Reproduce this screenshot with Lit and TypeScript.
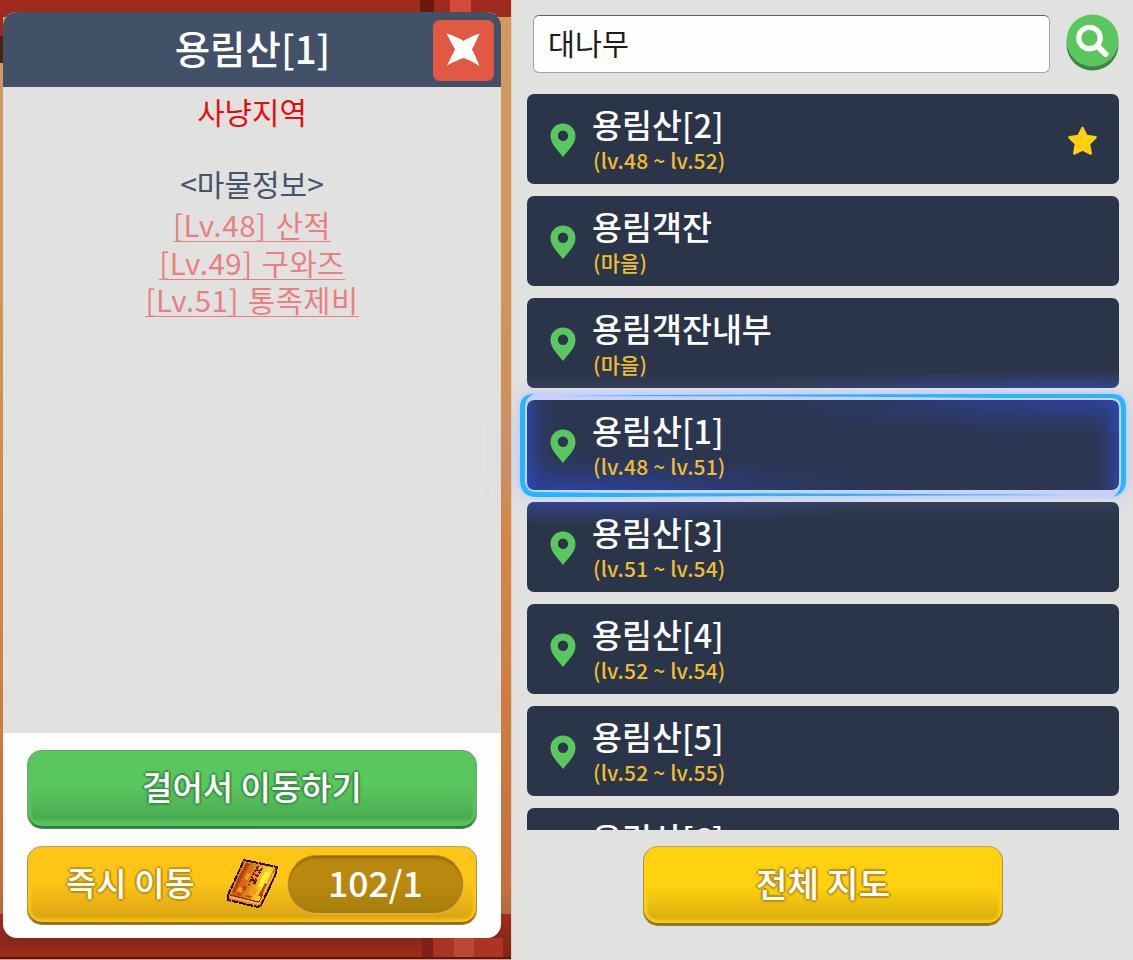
import { LitElement, css, html, svg, nothing } from "lit";

interface Place {
  name: string;
  info: string;
  favorite?: boolean;
  active?: boolean;
}

const PLACES: Place[] = [
  { name: "용림산[2]", info: "(lv.48 ~ lv.52)", favorite: true },
  { name: "용림객잔", info: "(마을)" },
  { name: "용림객잔내부", info: "(마을)" },
  { name: "용림산[1]", info: "(lv.48 ~ lv.51)", active: true },
  { name: "용림산[3]", info: "(lv.51 ~ lv.54)" },
  { name: "용림산[4]", info: "(lv.52 ~ lv.54)" },
  { name: "용림산[5]", info: "(lv.52 ~ lv.55)" },
  { name: "용림산[6]", info: "(lv.53 ~ lv.55)" },
];

const MONSTERS = ["[Lv.48] 산적", "[Lv.49] 구와즈", "[Lv.51] 통족제비"];

class PlaceCard extends LitElement {
  static properties = {
    place: { attribute: false },
  };

  static styles = css`
    :host {
      display: block;
      position: relative;
    }

    .card {
      box-sizing: border-box;
      width: 592px;
      height: 90px;
      border-radius: 7px;
      background: #2b3549;
      display: flex;
      align-items: center;
      padding: 0 21px 0 23px;
    }

    .card.active {
      background:
        radial-gradient(ellipse 330px 36px at 8% 100%, rgb(45 72 190 / 65%), rgb(45 72 190 / 20%) 55%, transparent),
        radial-gradient(ellipse 330px 36px at 92% 0%, rgb(45 72 190 / 65%), rgb(45 72 190 / 20%) 55%, transparent),
        linear-gradient(90deg, rgb(45 72 180 / 80%), rgb(45 72 180 / 20%) 14px, transparent 32px),
        linear-gradient(270deg, rgb(45 72 180 / 80%), rgb(45 72 180 / 20%) 14px, transparent 32px), #2b3651;
    }

    .pin {
      width: 26px;
      height: 34px;
      margin-top: 1px;
      flex: none;
    }

    .text {
      margin-left: 16px;
      flex: 1;
    }

    .name {
      margin: 0;
      font-size: 32.6px;
      line-height: 40px;
      font-weight: 500;
      color: white;
      white-space: nowrap;
    }

    .info {
      margin: 1px 0 0;
      font-size: 21px;
      line-height: 30px;
      font-weight: 500;
      letter-spacing: 0.15px;
      color: #efbd2f;
      padding-left: 1px;
      white-space: nowrap;
    }

    .star {
      width: 31px;
      height: 30px;
      margin-top: 3px;
      flex: none;
    }

    .glow {
      position: absolute;
      z-index: 1;
      left: -107px;
      top: -112px;
      width: 800px;
      height: 314px;
      pointer-events: none;
    }
  `;

  declare place: Place;

  constructor() {
    super();
    this.place = { name: "", info: "" };
  }

  private renderStar() {
    return html`
      <svg class="star" viewBox="0 0 31 30">
        <path
          d="M15.5 2 L19.5 10 L28.5 11.3 L22 17.8 L23.7 27.5 L15.5 23.4 L7.3 27.5 L9 17.8 L2.5 11.3 L11.5 10 Z"
          fill="#ffcf10"
          stroke="#ffcf10"
          stroke-width="2.6"
          stroke-linejoin="round"
        />
      </svg>
    `;
  }

  // Origin of the drawing is the card's top left corner.
  private renderGlow() {
    return html`
      <svg class="glow" viewBox="-107 -112 800 314">
        <defs>
          <filter id="wide" x="-20%" y="-100%" width="140%" height="300%">
            <feGaussianBlur stdDeviation="14" />
          </filter>
          <filter id="soft" x="-5%" y="-20%" width="110%" height="140%">
            <feGaussianBlur stdDeviation="1.4" />
          </filter>
          <clipPath id="outside">
            <path clip-rule="evenodd" d="M-107-112H693V202H-107Z M7 0H585Q592 0 592 7V83Q592 90 585 90H7Q0 90 0 83V7Q0 0 7 0Z" />
          </clipPath>
          <clipPath id="above">
            <rect x="0" y="-102" width="592" height="90" rx="7" />
          </clipPath>
          <clipPath id="below">
            <rect x="0" y="102" width="592" height="90" rx="7" />
          </clipPath>
          <radialGradient id="blue">
            <stop offset="0" stop-color="#2f50d8" stop-opacity=".5" />
            <stop offset=".5" stop-color="#2f50d8" stop-opacity=".2" />
            <stop offset="1" stop-color="#2f50d8" stop-opacity="0" />
          </radialGradient>
        </defs>
        <g clip-path="url(#outside)">
          ${svg`
            <rect x="-16" y="-4" width="624" height="98" rx="20" fill="#a0a8ff" fill-opacity=".32" filter="url(#wide)" />
            <ellipse cx="545" cy="-10" rx="330" ry="20" fill="url(#blue)" clip-path="url(#above)" />
            <ellipse cx="40" cy="100" rx="330" ry="26" fill="url(#blue)" clip-path="url(#below)" />
            <rect x="-4" y="-4" width="600" height="98" rx="11" fill="none" stroke="#c7d0fd" stroke-width="9" filter="url(#soft)" />
            <path d="M-7 8Q-7-6 7-6Q-2-3-2 8V80Q-2 92 10 92L90 93Q300 93 550 95Q300 95.500 90 97H10Q-7 97-7 80Z" fill="#22b8fa" />
            <path d="M599 82Q598 94 586 97Q594 91 594 82V9Q594-2 585-2H470Q300-4 30-4Q240-6 470-6H585Q599-6 599 9Z" fill="#22b8fa" />
          `}
        </g>
      </svg>
    `;
  }

  render() {
    const { name, info, favorite, active } = this.place;
    return html`
      <div class="card ${active ? "active" : ""}">
        <svg class="pin" viewBox="0 0 26 34">
          <path
            fill="#59c75e"
            fill-rule="evenodd"
            d="M13 0.500C5.800 0.500 0.500 6 0.500 13C0.500 21 8 27.500 13 34C18 27.500 25.500 21 25.500 13C25.500 6 20.200 0.500 13 0.500ZM13 7.500A5.200 5.200 0 1 1 13 17.900A5.200 5.200 0 1 1 13 7.500Z"
          />
        </svg>
        <div class="text">
          <p class="name">${name}</p>
          <p class="info">${info}</p>
        </div>
        ${favorite ? this.renderStar() : nothing}
      </div>
      ${active ? this.renderGlow() : nothing}
    `;
  }
}

class AppRoot extends LitElement {
  static styles = css`
    :host {
      display: grid;
      grid-template-columns: 511px 622px;
      width: 1133px;
      height: 960px;
      overflow: hidden;
      font-family: "Noto Sans CJK KR", sans-serif;
    }

    p,
    h1 {
      margin: 0;
    }

    .map {
      box-sizing: border-box;
      height: 960px;
      padding: 12px 10px 22px 3px;
      background:
        linear-gradient(#4a2412, #4a2412) 0 36px / 3px 27px no-repeat,
        linear-gradient(#9f2b1e, #9f2b1e) 0 0 / 3px 36px no-repeat,
        linear-gradient(90deg, transparent 420px, #6c1710 420px 434px, transparent 434px 450px, #d64a38 450px 471px, transparent 471px)
          0 0 / 511px 12px no-repeat,
        linear-gradient(90deg, transparent 422px, #7d2018 422px 433px, #a83422 433px 454px, #bb4a31 454px 474px, #ad3420 474px 503px, #8a2415 503px)
          0 938px / 511px 19px no-repeat,
        linear-gradient(#9f2b1e 17px, #d39a60 17px, #d29458 300px, #d28446 600px, #c4703c 890px, #b26740 914px, #a82a17 914px, #84291c 940px, #a62a17 957px, #5d1711 957px 959px, #d69487 959px);
    }

    .panel {
      display: flex;
      flex-direction: column;
      height: 926px;
      border-radius: 14px;
      overflow: hidden;
      background: #fefefd;
    }

    .panel-head {
      box-sizing: border-box;
      height: 75px;
      background: #415168;
      display: grid;
      grid-template-columns: 61px 1fr 61px;
      align-items: center;
      padding: 1px 7px 0 8px;
    }

    .title {
      grid-column: 2;
      text-align: center;
      font-size: 38.5px;
      line-height: 60px;
      padding-bottom: 7px;
      font-weight: 500;
      color: white;
    }

    .close {
      width: 61px;
      height: 61px;
      padding: 0;
      border: none;
      border-radius: 7px;
      background: #e15843;
    }

    .close svg {
      display: block;
      width: 61px;
      height: 61px;
    }

    .panel-body {
      height: 646px;
      background: #e1e1e0;
      text-align: center;
      font-size: 30px;
      line-height: 38px;
      color: #43546b;
    }

    .zone {
      padding-top: 5px;
      font-size: 29.8px;
      color: #e90c0c;
    }

    .label {
      padding-top: 34px;
    }

    .monsters {
      list-style: none;
      margin: 3px 0 0;
      padding: 0;
      color: #ea7f80;
    }

    .monsters li {
      height: 37.7px;
    }

    .monsters span {
      display: inline-block;
      height: 34px;
      font-size: 29.5px;
      line-height: 34px;
      letter-spacing: 0.5px;
      word-spacing: 2px;
      border-bottom: 1.5px solid #ea7f80;
    }

    .panel-foot {
      display: flex;
      flex-direction: column;
      gap: 17px;
      padding: 17px 24px 0;
    }

    .button {
      box-sizing: border-box;
      display: flex;
      align-items: center;
      justify-content: center;
      height: 79px;
      padding: 0 0 8px;
      border: 1.5px solid;
      border-radius: 15px;
      font: 500 33px/48px "Noto Sans CJK KR", sans-serif;
      color: white;
    }

    .green {
      border-color: #6ea56d #7f9f7f #5f7d60;
      background: linear-gradient(#59c75e 45%, #4aab50 88%, #53c05a 92%);
      box-shadow:
        inset 0 -2px 0 #37793e,
        inset 0 -5px 3px #56c45b,
        inset 5px 0 3px -2px #59c75e,
        inset -5px 0 3px -2px #59c75e;
      text-shadow:
        2px 0 1px #3f9147,
        -2px 0 1px #3f9147,
        0 2px 1px #3f9147,
        0 -2px 1px #3f9147,
        0 0 3px #3f9147;
    }

    .amber,
    .yellow {
      border-color: #b9a26d #a38f64 #8d7d50;
      text-shadow:
        2px 0 1px #c0930f,
        -2px 0 1px #c0930f,
        0 2px 1px #c0930f,
        0 -2px 1px #c0930f,
        0 0 3px #c0930f;
    }

    .amber {
      background: linear-gradient(#ffc516 45%, #dba713 90%);
      box-shadow:
        inset 0 -2px 0 #8d6c16,
        inset 0 -5px 3px #fcc216,
        inset 5px 0 3px -2px #ffc516,
        inset -5px 0 3px -2px #ffc516;
      justify-content: flex-start;
      padding-left: 38px;
    }

    .yellow {
      width: 360px;
      height: 80px;
      font-size: 34.5px;
      background: linear-gradient(#ffd20f 50%, #dbb00e 90%);
      box-shadow:
        inset 0 -2px 0 #8d7413,
        inset 0 -5px 3px #fccd10,
        inset 5px 0 3px -2px #ffd20f,
        inset -5px 0 3px -2px #ffd20f;
    }

    .book {
      width: 52px;
      height: 50px;
      margin: 5px 0 0 32px;
    }

    .count {
      box-sizing: border-box;
      width: 177px;
      height: 59px;
      margin: 6px 0 0 8px;
      border: 1.5px solid #dcb052;
      border-top-color: #b98b15;
      border-radius: 30px;
      background: linear-gradient(#b9890f 50%, #a67d0c);
      box-shadow: inset 0 2px 2px #8e690c;
      font-size: 35.5px;
      line-height: 52px;
      text-align: center;
      text-shadow: none;
    }

    .side {
      box-sizing: border-box;
      height: 960px;
      padding: 14px 0 0 15px;
      background: #e1e1e0;
      border-left: 1px solid #d5cfc6;
    }

    .search {
      display: flex;
      gap: 16px;
      padding-left: 6px;
      height: 80px;
    }

    .field {
      box-sizing: border-box;
      width: 517px;
      height: 58px;
      margin-top: 1px;
      padding: 0 14px 4px;
      border: 1.5px solid #a5a5a3;
      border-top-color: #62625f;
      border-radius: 6px;
      background: #fefefd;
      font: 400 29.3px/50px "Noto Sans CJK KR", sans-serif;
      color: #1c1c1c;
      outline: none;
    }

    .find {
      width: 53px;
      height: 58px;
      padding: 0;
      border: none;
      background: none;
    }

    .find svg {
      display: block;
      width: 53px;
      height: 58px;
    }

    .list {
      display: flex;
      flex-direction: column;
      gap: 12px;
      height: 736px;
      clip-path: inset(0 -100px);
    }

    .side-foot {
      display: flex;
      padding: 16px 0 0 116px;
    }
  `;

  private renderBook() {
    return html`
      <svg class="book" viewBox="0 0 52 50" shape-rendering="crispEdges">
        <defs>
          <linearGradient id="cover" x1="0" y1=".3" x2="1" y2=".6">
            <stop offset="0" stop-color="#c4480f" />
            <stop offset=".38" stop-color="#d76e14" />
            <stop offset=".6" stop-color="#f2a714" />
            <stop offset=".8" stop-color="#ffe022" />
            <stop offset="1" stop-color="#d98d12" />
          </linearGradient>
        </defs>
        <path fill="#dc8a2c" d="M17 1L50 8L48 17L34 46L31 48L1 41V36Z" />
        <path fill="url(#cover)" d="M19 3L47 9L32 43L4 36Z" />
        <path fill="#b83d12" d="M19 4L23 5L17 15L12 25L8 33L5 33L11 19ZM27 21L30 22L28 26L25 25ZM17 27L20 28L18 32L15 31Z" />
        <path fill="#f39a1b" d="M20 14L24 15L21 21L17 20ZM12 28L16 29L14 33L10 32ZM26 29L31 30L28 36L22 34Z" />
        <path fill="#fff13c" d="M38 13L43 13L41 19L37 22L35 28L31 28L34 20Z" />
        <path fill="#b94c10" d="M36 28L38 24L40 25L34 38L31 37ZM10 34L15 35L14 37L9 36ZM19 36L25 37L24 39L18 38Z" />
        <path
          fill="none"
          stroke="#4f1507"
          stroke-width="1.800"
          stroke-dasharray="3 1.500 2 1"
          d="M31 7L26 16L22 26M35 9L30 18L27 26M30 11L33 12M28 16L31 17M25 21L29 22"
        />
        <path fill="none" stroke="#f7b650" stroke-width="1.400" d="M3 38L32 45L47 14" />
        <path
          fill="none"
          stroke="#2a0e06"
          stroke-width="2"
          stroke-dasharray="7 .6"
          d="M17 1L50 8L48 17L34 46L31 48L1 41V36Z"
        />
        <path fill="none" stroke="#8f300e" stroke-width="1.200" d="M3 36L32 43L36 35" />
      </svg>
    `;
  }

  render() {
    return html`
      <div class="map">
        <section class="panel">
          <header class="panel-head">
            <h1 class="title">용림산[1]</h1>
            <button class="close" type="button" aria-label="닫기">
              <svg viewBox="0 0 61 61">
                <path
                  fill="white"
                  d="M13.500 13.500Q25 17 30.500 21Q36 17 46.500 13.500Q42 24 39 29.500Q42 35 46.500 46Q37 40 30.500 38Q24 40 14 45.500Q19 35 22 29.500Q19 24 13.500 13.500Z"
                />
              </svg>
            </button>
          </header>
          <div class="panel-body">
            <p class="zone">사냥지역</p>
            <p class="label">&lt;마물정보&gt;</p>
            <ul class="monsters">
              ${MONSTERS.map((monster) => html`<li><span>${monster}</span></li>`)}
            </ul>
          </div>
          <footer class="panel-foot">
            <button class="button green" type="button">걸어서 이동하기</button>
            <button class="button amber" type="button">
              즉시 이동 ${this.renderBook()}
              <span class="count">102/1</span>
            </button>
          </footer>
        </section>
      </div>
      <main class="side">
        <div class="search">
          <input class="field" type="text" .value=${"대나무"} />
          <button class="find" type="button" aria-label="검색">
            <svg viewBox="0 0 53 58">
              <circle cx="26.500" cy="30.500" r="26" fill="#3d8547" />
              <circle cx="26.500" cy="26.500" r="26" fill="#59c75e" />
              <circle cx="23.500" cy="24" r="10.700" fill="none" stroke="white" stroke-width="5.200" />
              <path d="M31.500 32L39.500 40" stroke="white" stroke-width="6" stroke-linecap="round" />
            </svg>
          </button>
        </div>
        <div class="list">
          ${PLACES.map((place) => html`<place-card .place=${place}></place-card>`)}
        </div>
        <div class="side-foot">
          <button class="button yellow" type="button">전체 지도</button>
        </div>
      </main>
    `;
  }
}

if (!customElements.get("place-card")) {
  customElements.define("place-card", PlaceCard);
}

if (!customElements.get("app-root")) {
  customElements.define("app-root", AppRoot);
}
